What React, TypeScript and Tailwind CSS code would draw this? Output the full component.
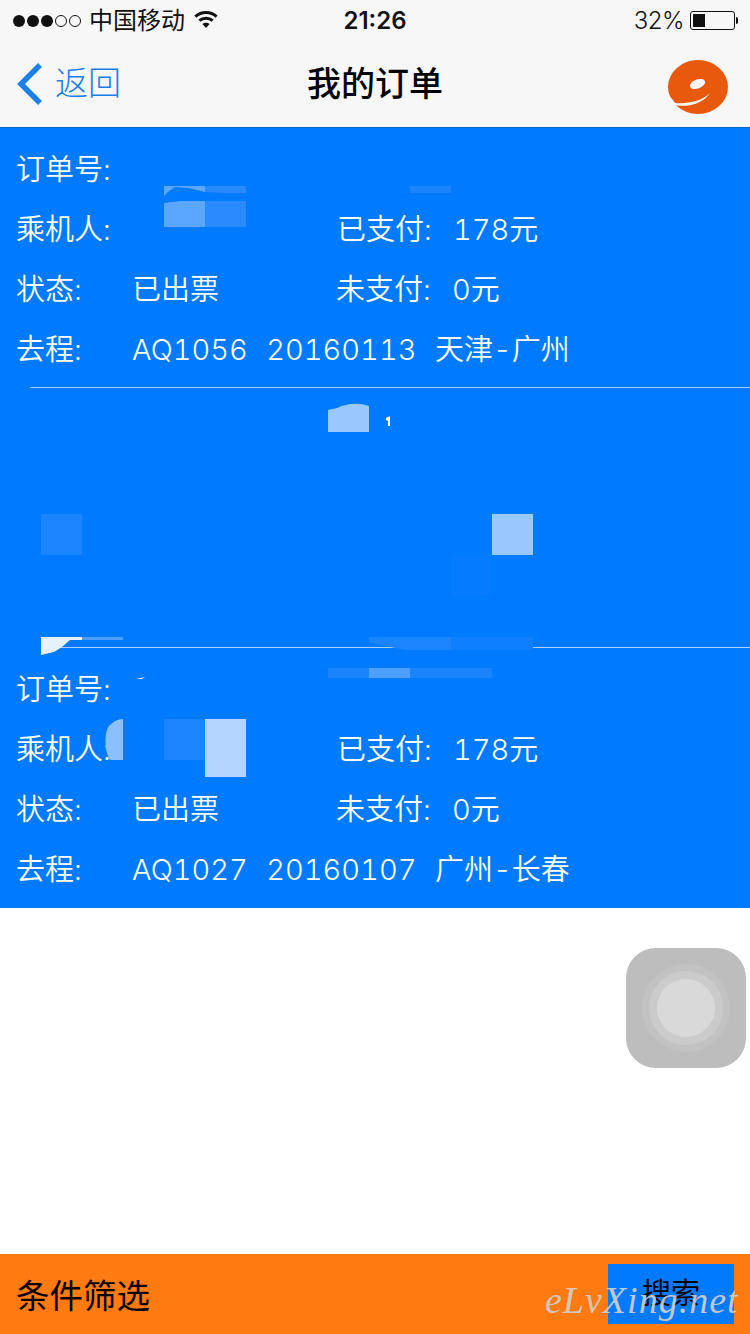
import React from 'react';

const sans = "font-['Inter','Noto_Sans_CJK_SC',sans-serif]";

interface Order {
  flight: string;
  paid: string;
  unpaid: string;
  trip: string;
}

const orders: Order[] = [
  { flight: 'AQ1056', paid: '178元', unpaid: '0元', trip: '20160113  天津-广州' },
  { flight: 'AQ1027', paid: '178元', unpaid: '0元', trip: '20160107  广州-长春' },
];

const OrderCard: React.FC<{ order: Order }> = ({ order }) => (
  <div className="h-[260px] pt-3 pl-4 text-[29px] leading-[60px] text-white font-[350] tabular-nums whitespace-pre [word-spacing:1.5px]">
    <div className="h-[60px]">订单号:</div>
    <div className="flex h-[60px]">
      <div className="w-[321px]">乘机人:</div>
      <div className="w-[116px]">已支付:</div>
      <div>{order.paid}</div>
    </div>
    <div className="flex h-[60px]">
      <div className="w-[116px]">状态:</div>
      <div className="w-[204px]">已出票</div>
      <div className="w-[116px]">未支付:</div>
      <div>{order.unpaid}</div>
    </div>
    <div className="flex h-[60px]">
      <div className="w-[116px]">去程:</div>
      <div>{order.flight}  {order.trip}</div>
    </div>
  </div>
);

// mosaic left over the hidden names and order numbers, coords are page y - 128
const Mosaic = () => (
  <svg className="absolute left-0 top-0" width="750" height="780" viewBox="0 0 750 780">
    <rect x="110" y="85" width="13" height="32" fill="#007aff" />
    <path d="M164 58 H205 V64 L188 60 L175 59 L168 64 L164 68 Z" fill="#5ba6ff" />
    <path d="M205 58 H246 V65 L225 65 L205 64 Z" fill="#2a8aff" />
    <path d="M164 75 L180 73 H205 V99 H164 Z" fill="#5ba6ff" />
    <rect x="205" y="73" width="41" height="26" fill="#2a8aff" />
    <rect x="410" y="58" width="41" height="7" fill="#1a85ff" />

    <path d="M328 304 V282 L337 280 C345 276 358 274 369 278 V304 Z" fill="#99c8ff" />
    <path d="M386 290 L390 288 V298 H388 V293 L386 292 Z" fill="#ffffff" />
    <rect x="41" y="386" width="41" height="41" fill="#1a85ff" />
    <rect x="492" y="386" width="41" height="41" fill="#99c8ff" />
    <rect x="451" y="427" width="41" height="41" fill="#057cff" />

    <path d="M41 509 H82 V512 H70 L62 519 L54 524 L41 527 Z" fill="#e6f1ff" />
    <rect x="82" y="509" width="41" height="3" fill="#4da0ff" />
    <path d="M369 509 H451 V522 H405 L385 518 L369 514 Z" fill="#1a85ff" />
    <path d="M451 509 H533 V520 L531 522 H451 Z" fill="#0d7fff" />
    <rect x="328" y="540" width="41" height="10" fill="#1a85ff" />
    <rect x="369" y="540" width="41" height="10" fill="#4da0ff" />
    <rect x="410" y="540" width="82" height="10" fill="#1a85ff" />

    <path d="M136 551 L145 549 L142 551 Z" fill="#e6f1ff" />
    <path d="M123 591 V632 H110 C104 622 104 602 110 597 C114 593 118 591 123 591 Z" fill="#8cbfff" />
    <rect x="164" y="591" width="41" height="41" fill="#1a85ff" />
    <rect x="205" y="591" width="41" height="58" fill="#b3d5ff" />
  </svg>
);

const StatusBar = () => (
  <div className="flex h-10 items-center text-[24px] text-[#111] relative">
    <div className="flex items-center gap-[2px] pl-[13px] pt-[1px]">
      <span className="w-[12px] h-[12px] rounded-full bg-[#111]" />
      <span className="w-[12px] h-[12px] rounded-full bg-[#111]" />
      <span className="w-[12px] h-[12px] rounded-full bg-[#111]" />
      <span className="w-[12px] h-[12px] rounded-full border border-[#111]" />
      <span className="w-[12px] h-[12px] rounded-full border border-[#111]" />
    </div>
    <span className="ml-[8px] pt-[2px] leading-none">中国移动</span>
    <svg className="ml-[9px]" width="24" height="18" viewBox="0 0 24 18">
      <path d="M12 17 L8.4 13 C10.4 11.2 13.6 11.2 15.6 13 Z" fill="#111" />
      <path d="M5.4 9.6 C9 6.4 15 6.4 18.6 9.6" fill="none" stroke="#111" strokeWidth="3" />
      <path d="M1.4 5.6 C7.4 0.2 16.6 0.2 22.6 5.6" fill="none" stroke="#111" strokeWidth="3" />
    </svg>
    <span className="absolute left-0 right-0 pt-[2px] text-center font-semibold leading-none">21:26</span>
    <div className="ml-auto flex items-center pr-[12px]">
      <span className="leading-none pt-[2px] font-light tracking-[-0.5px]">32%</span>
      <div className="ml-[6px] w-[45px] h-[19px] rounded-[3px] border border-[#111] p-[2px]">
        <div className="h-full w-[12px] bg-[#111]" />
      </div>
      <div className="ml-[1px] w-[2px] h-[7px] bg-[#111] rounded-r-sm" />
    </div>
  </div>
);

const NavBar = () => (
  <div className="flex h-[88px] items-center relative border-b border-[#0a66cc]">
    <svg className="ml-[17px]" width="26" height="42" viewBox="0 0 26 42">
      <path d="M23 2 L4 21 L23 40" fill="none" stroke="#1a7fe8" strokeWidth="5.5" />
    </svg>
    <span className="ml-[12px] text-[33px] leading-none text-[#1a7fe8] font-light">返回</span>
    <span className="absolute left-0 right-0 pt-[1px] text-center text-[34px] leading-none font-medium text-black">我的订单</span>
    <svg className="ml-auto mr-[22px] mt-[6px]" width="60" height="54" viewBox="0 0 60 54">
      <ellipse cx="30" cy="27" rx="30" ry="27" fill="#e8590c" />
      <path d="M0 34 L8 44 L6 54 H0 Z" fill="#f7f7f7" />
      <path d="M7 43 C20 44 34 41 42 33 C36 43 20 48 7 45 Z" fill="#f7f7f7" />
      <ellipse cx="29.5" cy="24" rx="8" ry="4.5" transform="rotate(-20 29.5 24)" fill="#f7f7f7" />
    </svg>
  </div>
);

const AssistiveTouch = () => (
  <div className="absolute left-[626px] top-[948px] w-[120px] h-[120px] rounded-[30px] bg-[#bdbdbd] flex items-center justify-center">
    <div className="w-[88px] h-[88px] rounded-full bg-[#c2c2c2] flex items-center justify-center">
      <div className="w-[74px] h-[74px] rounded-full bg-[#cbcbcb] flex items-center justify-center">
        <div className="w-[58px] h-[58px] rounded-full bg-[#d9d9d9]" />
      </div>
    </div>
  </div>
);

export default function App() {
  return (
    <div className={`relative w-[750px] h-[1334px] overflow-hidden bg-white flex flex-col ${sans}`}>
      <div className="bg-[#f7f7f7]">
        <StatusBar />
        <NavBar />
      </div>

      <div className="relative bg-[#007aff]">
        <OrderCard order={orders[0]} />
        <div className="ml-[30px] h-px bg-[#a8d0ff] -mt-px" />
        <div className="h-[260px]" />
        <div className="ml-[41px] h-px bg-[#a8d0ff] -mt-px" />
        <OrderCard order={orders[1]} />
        <Mosaic />
      </div>

      <div className="flex-1" />

      <div className="flex h-20 items-center justify-between bg-[#ff7a10] pl-4 pr-4">
        <span className="pt-[6px] text-[33.5px] leading-none text-black">条件筛选</span>
        <div className="w-[126px] h-[60px] flex items-center justify-center bg-[#007aff] text-[29px] text-black">搜索</div>
      </div>

      <AssistiveTouch />
      <span className="absolute left-[545px] top-[1281px] font-['Liberation_Serif',serif] italic text-[38px] leading-none tracking-[1px] text-[#d4d0cc] opacity-90">eLvXing.net</span>
    </div>
  );
}
